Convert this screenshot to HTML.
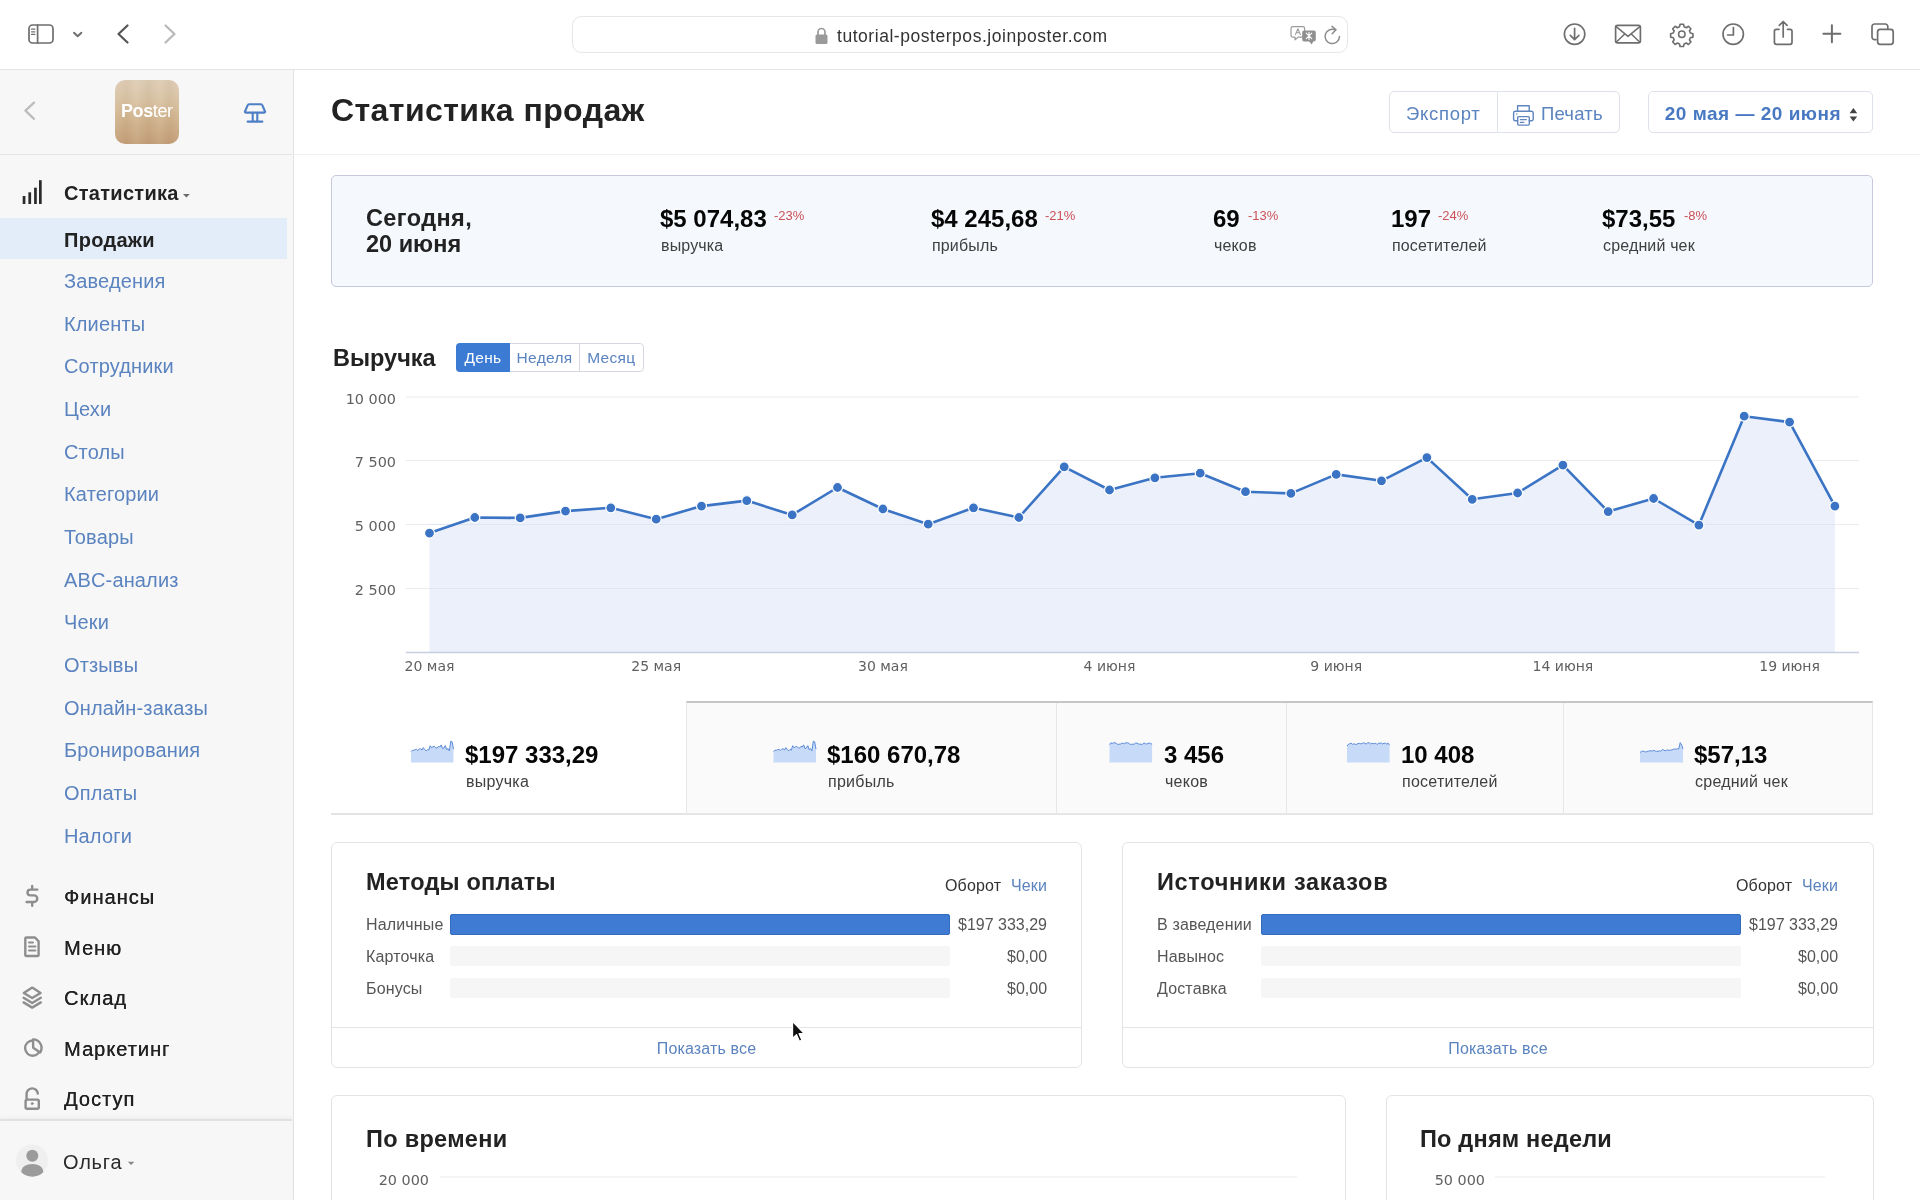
<!DOCTYPE html>
<html lang="ru">
<head>
<meta charset="utf-8">
<title>Статистика продаж</title>
<style>
*{box-sizing:border-box;margin:0;padding:0}
html,body{width:1920px;height:1200px;overflow:hidden;background:#fff}
body{font-family:"Liberation Sans",sans-serif;color:#222;position:relative}
.abs{position:absolute;white-space:nowrap;will-change:transform}
svg{position:absolute;overflow:visible;will-change:transform}
/* browser toolbar */
#tb{position:absolute;left:0;top:0;width:1920px;height:70px;background:#fff;border-bottom:1px solid #e4e4e4}
#url{position:absolute;left:572px;top:16.3px;width:776px;height:36.8px;border:1.5px solid #e6e6e6;border-radius:9.5px;background:#fff}
#urlt{left:837px;top:24.5px;font-size:17.5px;line-height:22px;color:#333;letter-spacing:0.54px}
/* sidebar */
#sb{position:absolute;left:0;top:70px;width:293.5px;height:1130px;background:#f7f7f7;border-right:1.5px solid #e2e2e2}
#sbh{position:absolute;left:0;top:0;width:292px;height:85px;border-bottom:1.5px solid #e4e4e4}
#logo{position:absolute;left:115px;top:10px;width:64px;height:64px;border-radius:10px;background:linear-gradient(90deg,rgba(255,255,255,0.05) 0%,rgba(120,80,40,0.04) 18%,rgba(255,255,255,0.07) 33%,rgba(120,80,40,0.05) 52%,rgba(255,255,255,0.06) 70%,rgba(120,80,40,0.05) 85%,rgba(255,255,255,0.04) 100%),linear-gradient(180deg,#decdb5 0%,#d9c3a4 30%,#d1b48f 60%,#c39e78 100%);overflow:hidden}
#logo span{will-change:transform;position:absolute;left:6px;top:20px;font-size:18px;line-height:22px;color:#fff;letter-spacing:-0.4px}
#logo b{font-weight:bold}
.s1{left:64px;font-size:20px;line-height:24px;color:#222;letter-spacing:1px;text-shadow:0.35px 0 0 #222}
.s1b{letter-spacing:0.3px;text-shadow:none}
.s2{left:64px;font-size:20px;line-height:24px;color:#5a83bf;letter-spacing:0.15px}
#act{position:absolute;left:0;top:148px;width:287px;height:41px;background:#e3edfa}
#sbf{position:absolute;left:0;top:1049px;width:292px;height:81px;border-top:2px solid #e1e1e1;background:#f7f7f7;box-shadow:0 -2px 3px rgba(0,0,0,0.035)}
/* main */
#hd{position:absolute;left:294px;top:70px;width:1626px;height:85px;border-bottom:1.5px solid #f0f0f0;background:#fff}
#title{left:331px;top:90px;font-size:32px;line-height:40px;font-weight:bold;color:#222;letter-spacing:0.42px}
.btn{position:absolute;top:91px;height:42px;border:1px solid #dde1e8;background:#fff;font-size:18.5px;line-height:44px;color:#5a83bf;white-space:nowrap;will-change:transform}
#today{position:absolute;left:331px;top:175px;width:1542px;height:111.5px;background:#f5f9fd;border:1.5px solid #c6c8de;border-radius:5px}
.tn{font-size:24px;line-height:28px;font-weight:bold;color:#060606;top:205px}
.tl{font-size:16px;line-height:20px;color:#404040;top:235.5px;letter-spacing:0.15px;margin-left:0.8px}
.tp{font-size:13px;line-height:14px;color:#cb4f55;top:209px}
.h2{font-size:24px;line-height:30px;font-weight:bold;color:#222}
.card{position:absolute;border:1px solid #e3e3e4;border-radius:6px;background:#fff}
.cl{font-size:16px;line-height:20px;color:#555;letter-spacing:0.15px}
.lnk{color:#5a83bf}
.bar{position:absolute;height:20px;border-radius:2px;background:#f6f6f6}
.bar.f{background:#3f7bd2;border:1px solid #356bbb;height:21px;margin-top:-0.5px}
.sn{font-size:24px;line-height:28px;font-weight:bold;color:#060606;top:740.5px}
.sl{font-size:16px;line-height:20px;color:#404040;top:771.5px;letter-spacing:0.25px;margin-left:0.8px}
.ax{font-family:"DejaVu Sans",sans-serif;font-size:14px;fill:#606060}
</style>
</head>
<body>
<!-- TOOLBAR -->
<div id="tb"></div>
<div id="url"></div>
<div class="abs" id="urlt">tutorial-posterpos.joinposter.com</div>

<svg id="tbi" width="1920" height="70" style="left:0;top:0" fill="none" stroke="#6e6e6e" stroke-width="1.7" stroke-linecap="round" stroke-linejoin="round">
<!-- sidebar toggle -->
<rect x="29" y="25" width="24" height="18" rx="3.5"/><line x1="37.6" y1="25" x2="37.6" y2="43"/>
<g stroke-width="1.3"><line x1="31.6" y1="29.2" x2="34.8" y2="29.2"/><line x1="31.6" y1="31.8" x2="34.8" y2="31.8"/><line x1="31.6" y1="34.4" x2="34.8" y2="34.4"/></g>
<polyline points="74,32.7 77.7,36.3 81.4,32.7" stroke-width="1.9"/>
<polyline points="127.5,25.5 118.5,34 127.5,42.5" stroke="#555" stroke-width="2.2"/>
<polyline points="165.5,25.5 174.5,34 165.5,42.5" stroke="#b9b9b9" stroke-width="2.3"/>
<!-- tb-lock -->
<g stroke="none" fill="#9a9a9a"><rect x="815.5" y="34.5" width="12" height="9.5" rx="1.5"/></g>
<path d="M818 35 v-3 a3.5 3.5 0 0 1 7 0 v3" stroke="#9a9a9a" stroke-width="1.7"/>
<!-- translate -->
<g stroke="#9b9b9b" stroke-width="1.2">
<path d="M1292.8 26.6 h10 a1.8 1.8 0 0 1 1.8 1.8 v6.9 a1.8 1.8 0 0 1 -1.8 1.8 h-4.6 l-3.2 2.7 v-2.7 h-2.2 a1.8 1.8 0 0 1 -1.8 -1.8 v-6.9 a1.8 1.8 0 0 1 1.8 -1.8z"/>
<path d="M1295.4 34.6 l2.5 -5.8 l2.5 5.8 M1296.3 32.8 h3.2" stroke-width="1.1"/>
</g>
<path d="M1304.2 30.4 h9.6 a2 2 0 0 1 2 2 v7 a2 2 0 0 1 -2 2 h-0.6 l-1.4 3.1 l-2.6 -3.1 h-5 a2 2 0 0 1 -2 -2 v-7 a2 2 0 0 1 2 -2z" fill="#8f8f8f" stroke="none"/>
<path d="M1306.2 33.2 l5.6 5.4 M1311.8 33.2 l-5.6 5.4 M1309 32.2 v7.4" stroke="#fff" stroke-width="1.1"/>
<!-- reload -->
<path d="M1339.5 36.6 a7.2 7.2 0 1 1 -3.9 -6.6" stroke="#8c8c8c" stroke-width="1.5"/>
<polyline points="1332,26.4 1336,29.8 1332.2,33.8" stroke="#8c8c8c" stroke-width="1.5"/>
<!-- download -->
<circle cx="1574.6" cy="34.2" r="10.2"/><path d="M1574.6 28.3 v11 M1570.3 35.4 l4.3 4.2 l4.3 -4.2"/>
<!-- mail -->
<rect x="1615.6" y="25.4" width="24.8" height="17.4" rx="2"/><path d="M1616.2 26.6 l11.8 9.8 l11.8 -9.8 M1616.4 42 l8.3 -8 M1639.6 42 l-8.3 -8" stroke-width="1.5"/>
<!-- gear -->
<g transform="translate(1681.8 34.3) scale(0.9)"><circle r="3.6"/>
<path d="M-1.9 -11.2 h3.8 l0.7 2.9 l2.3 1.0 l2.5 -1.6 l2.7 2.7 l-1.6 2.5 l1.0 2.3 l2.9 0.7 v3.8 l-2.9 0.7 l-1.0 2.3 l1.6 2.5 l-2.7 2.7 l-2.5 -1.6 l-2.3 1.0 l-0.7 2.9 h-3.8 l-0.7 -2.9 l-2.3 -1.0 l-2.5 1.6 l-2.7 -2.7 l1.6 -2.5 l-1.0 -2.3 l-2.9 -0.7 v-3.8 l2.9 -0.7 l1.0 -2.3 l-1.6 -2.5 l2.7 -2.7 l2.5 1.6 l2.3 -1.0z" stroke-width="1.8"/></g>
<!-- clock -->
<circle cx="1733.2" cy="34.2" r="10.2"/><polyline points="1733.4,27.6 1733.4,35 1727.6,35"/>
<!-- share -->
<path d="M1779 29.3 h-2.6 a2 2 0 0 0 -2 2 v11 a2 2 0 0 0 2 2 h13.6 a2 2 0 0 0 2 -2 v-11 a2 2 0 0 0 -2 -2 h-2.6 M1783.2 37 v-15.2 M1779.3 25.4 l3.9 -3.9 l3.9 3.9"/>
<!-- plus -->
<path d="M1823.4 33.7 h17 M1831.9 25.2 v17" stroke-width="2"/>
<!-- tabs -->
<path d="M1876 39.6 h-1.4 a2.6 2.6 0 0 1 -2.6 -2.6 v-10.4 a2.6 2.6 0 0 1 2.6 -2.6 h10.6 a2.6 2.6 0 0 1 2.6 2.6 v1.6"/>
<rect x="1877.6" y="29.3" width="15.6" height="15" rx="2.6" fill="#fff"/>
</svg>
<!-- SIDEBAR -->
<div id="sb">
 <div id="sbh"><div id="logo"><span><b>Pos</b>ter</span></div></div>
 <div id="act"></div>
 <div id="sbf"></div>
</div>
<div class="abs s1 s1b" style="top:181px;font-weight:bold">Статистика</div>
<div class="abs s1 s1b" style="top:228px;font-weight:bold">Продажи</div>
<div class="abs s2" style="top:269px">Заведения</div>
<div class="abs s2" style="top:312px">Клиенты</div>
<div class="abs s2" style="top:354px">Сотрудники</div>
<div class="abs s2" style="top:397px">Цехи</div>
<div class="abs s2" style="top:440px">Столы</div>
<div class="abs s2" style="top:482px">Категории</div>
<div class="abs s2" style="top:525px">Товары</div>
<div class="abs s2" style="top:568px">ABC-анализ</div>
<div class="abs s2" style="top:610px">Чеки</div>
<div class="abs s2" style="top:653px">Отзывы</div>
<div class="abs s2" style="top:696px">Онлайн-заказы</div>
<div class="abs s2" style="top:738px">Бронирования</div>
<div class="abs s2" style="top:781px">Оплаты</div>
<div class="abs s2" style="top:824px">Налоги</div>
<div class="abs s1" style="top:885px">Финансы</div>
<div class="abs s1" style="top:936px">Меню</div>
<div class="abs s1" style="top:986px">Склад</div>
<div class="abs s1" style="top:1037px">Маркетинг</div>
<div class="abs s1" style="top:1087px">Доступ</div>
<div class="abs s1" style="top:1150px;left:62.5px;letter-spacing:0.8px;text-shadow:none;color:#2a2a2a">Ольга</div>
<svg id="sbi" width="293" height="1200" style="left:0;top:0" fill="none" stroke="#8e8e8e" stroke-width="2.4" stroke-linecap="round" stroke-linejoin="round">
<polyline points="34,102.6 25.4,110.7 34,118.8" stroke="#bdbdbd" stroke-width="2.3"/>
<!-- lamp -->
<g stroke="#4d7fc6" stroke-width="2.1"><path d="M249 104.2 h12 a1.4 1.4 0 0 1 1.3 0.9 l2.7 6.4 a0.8 0.8 0 0 1 -0.7 1.1 h-18.6 a0.8 0.8 0 0 1 -0.7 -1.1 l2.7 -6.4 a1.4 1.4 0 0 1 1.3 -0.9z"/><path d="M252.7 112.8 v8.6 M257.3 112.8 v8.6 M247.6 121.6 h14.8"/></g>
<!-- bars -->
<g stroke="none" fill="#2a2a2a"><rect x="22.7" y="196" width="2.7" height="8"/><rect x="28.4" y="192.3" width="2.7" height="11.7"/><rect x="34.1" y="187.7" width="2.7" height="16.3"/><rect x="39" y="180.2" width="2.7" height="23.8"/></g>
<path d="M183 194 h6.8 l-3.4 3.4z" fill="#6a6a6a" stroke="none"/>
<!-- dollar -->
<path d="M37.3 889.6 h-6.9 a2.9 2.9 0 0 0 0 5.8 h3.6 a3.3 3.3 0 0 1 0 6.6 h-7.4 M32.2 886 v3 M32.2 902.4 v3.4"/>
<!-- doc -->
<path d="M25.3 938.6 a1.1 1.1 0 0 1 1.1 -1.1 h8.6 l3.6 3.8 v13.6 a1.1 1.1 0 0 1 -1.1 1.1 h-11.1 a1.1 1.1 0 0 1 -1.1 -1.1z"/><path d="M29 942.4 h4 M29 946.5 h6.4 M29 950.6 h6.4" stroke-width="2"/>
<!-- layers -->
<path d="M32.2 987.6 l8.4 5.3 l-8.4 5.2 l-8.4 -5.2z M23.6 997.8 l8.6 5.2 l8.6 -5.2 M23.6 1002.4 l8.6 5.2 l8.6 -5.2"/>
<!-- pie -->
<circle cx="32.7" cy="1048.1" r="7.6"/><path d="M33 1039.4 a8.5 8.5 0 0 1 7.2 13 l-7 -4.6z" fill="#f7f7f7"/>
<!-- sb-lock -->
<rect x="25.6" y="1099.6" width="13.2" height="9.2" rx="1.6"/><path d="M26.6 1099.4 v-5 a5.6 5.6 0 0 1 11.2 -0.8"/><circle cx="32.2" cy="1103.6" r="1" fill="#8e8e8e" stroke-width="1"/>
<!-- avatar -->
<circle cx="32" cy="1160.5" r="16" fill="#efefef" stroke="none"/>
<circle cx="32.3" cy="1155.8" r="6" fill="#9b9b9b" stroke="none"/>
<path d="M21.3 1172.3 c0 -5.4 5 -8.2 11 -8.2 s11 2.8 11 8.2 a16 16 0 0 1 -22 0z" fill="#9b9b9b" stroke="none"/>
<path d="M127.8 1161.7 h6.6 l-3.3 3.4z" fill="#888" stroke="none"/>
</svg>
<!-- HEADER -->
<div id="hd"></div>
<div class="abs" id="title">Статистика продаж</div>
<div class="btn" style="left:1389px;width:108.5px;border-radius:5px 0 0 5px;padding-left:16px;letter-spacing:0.7px">Экспорт</div>
<div class="btn" style="left:1496.5px;width:122.5px;border-radius:0 5px 5px 0;padding-left:43px;letter-spacing:0.2px">Печать</div>
<div class="btn" style="left:1647.5px;width:224.5px;border-radius:5px;padding-left:15.8px;font-weight:bold;color:#4878c2;letter-spacing:0.5px;font-size:19px">20 мая — 20 июня</div>
<svg width="1920" height="160" style="left:0;top:0" fill="none" stroke="#5f86bf" stroke-width="1.4" stroke-linejoin="round" stroke-linecap="round">
<path d="M1517.6 111.2 v-5.4 h11.6 v5.4"/>
<path d="M1517.6 120.7 h-2.4 a1.6 1.6 0 0 1 -1.6 -1.6 v-6.2 a1.6 1.6 0 0 1 1.6 -1.6 h16.4 a1.6 1.6 0 0 1 1.6 1.6 v6.2 a1.6 1.6 0 0 1 -1.6 1.6 h-2.4"/>
<rect x="1517.7" y="116.6" width="11.6" height="8.5" rx="1"/>
<path d="M1520.4 119.6 h6 M1520.4 122.3 h3.5" stroke-width="1.2"/>
<circle cx="1516.8" cy="114" r="0.7" fill="#5f86bf" stroke="none"/>
<path d="M1849.6 113.2 l3.8 -5.2 l3.8 5.2z M1849.6 116.4 l3.8 5.2 l3.8 -5.2z" fill="#444" stroke="none"/>
</svg>

<!-- TODAY -->
<div id="today"></div>
<div class="abs h2" style="left:366px;top:205px;line-height:26px;font-size:23.5px"><span style="letter-spacing:0.4px">Сегодня,</span><br>20 июня</div>
<div class="abs tn" style="left:660px">$5 074,83</div><div class="abs tp" style="left:774px">-23%</div><div class="abs tl" style="left:660px">выручка</div>
<div class="abs tn" style="left:931px">$4 245,68</div><div class="abs tp" style="left:1045px">-21%</div><div class="abs tl" style="left:931px">прибыль</div>
<div class="abs tn" style="left:1213px">69</div><div class="abs tp" style="left:1248px">-13%</div><div class="abs tl" style="left:1213px">чеков</div>
<div class="abs tn" style="left:1391px">197</div><div class="abs tp" style="left:1438px">-24%</div><div class="abs tl" style="left:1391px">посетителей</div>
<div class="abs tn" style="left:1602px">$73,55</div><div class="abs tp" style="left:1684px">-8%</div><div class="abs tl" style="left:1602px">средний чек</div>

<!-- CHART -->
<div class="abs h2" style="left:332.5px;top:343px;font-size:23.5px">Выручка</div>
<div class="abs" style="left:456px;top:343px;width:187.5px;height:28.7px;border:1px solid #d5d9df;border-radius:4px;background:#fff"></div>
<div class="abs" style="left:456px;top:343px;width:54px;height:28.7px;background:#3c7bd3;border-radius:4px 0 0 4px;color:#fff;font-size:15.5px;letter-spacing:0.3px;line-height:29px;text-align:center">День</div>
<div class="abs lnk" style="left:510px;top:343px;width:70px;height:28.7px;border-right:1px solid #d5d9df;font-size:15.5px;letter-spacing:0.3px;line-height:29px;text-align:center">Неделя</div>
<div class="abs lnk" style="left:580px;top:343px;width:62.5px;height:28.7px;font-size:15.5px;letter-spacing:0.3px;line-height:29px;text-align:center">Месяц</div>
<!--CS--><svg id="chart" width="1920" height="1200" style="left:0;top:0">
<line x1="406" x2="1859" y1="397" y2="397" stroke="#ececf0" stroke-width="1.2"/>
<line x1="406" x2="1859" y1="460.5" y2="460.5" stroke="#ececf0" stroke-width="1.2"/>
<line x1="406" x2="1859" y1="524.5" y2="524.5" stroke="#ececf0" stroke-width="1.2"/>
<line x1="406" x2="1859" y1="588.5" y2="588.5" stroke="#ececf0" stroke-width="1.2"/>
<polygon points="429.5,652.5 429.5,533.1 474.8,517.5 520.2,517.9 565.5,511.1 610.8,507.8 656.2,519.2 701.5,506.1 746.8,500.6 792.2,514.9 837.5,487.5 882.9,509 928.2,524.2 973.5,507.8 1018.9,517.5 1064.2,466.8 1109.5,490 1154.9,477.8 1200.2,473.2 1245.5,491.7 1290.9,493.4 1336.2,474.4 1381.5,480.8 1426.9,457.6 1472.2,499.3 1517.6,493 1562.9,465.1 1608.2,511.6 1653.6,498.5 1698.9,525.1 1744.2,416.2 1789.6,422.1 1834.9,506.1 1834.9,652.5" fill="#ebf0fb"/>
<line x1="429.5" x2="1834.9" y1="524.5" y2="524.5" stroke="#dfe6f3" stroke-width="1.2"/>
<line x1="429.5" x2="1834.9" y1="588.5" y2="588.5" stroke="#dfe6f3" stroke-width="1.2"/>
<line x1="406" x2="1859" y1="652.5" y2="652.5" stroke="#c5cfdf" stroke-width="1.5"/>
<polyline points="429.5,533.1 474.8,517.5 520.2,517.9 565.5,511.1 610.8,507.8 656.2,519.2 701.5,506.1 746.8,500.6 792.2,514.9 837.5,487.5 882.9,509 928.2,524.2 973.5,507.8 1018.9,517.5 1064.2,466.8 1109.5,490 1154.9,477.8 1200.2,473.2 1245.5,491.7 1290.9,493.4 1336.2,474.4 1381.5,480.8 1426.9,457.6 1472.2,499.3 1517.6,493 1562.9,465.1 1608.2,511.6 1653.6,498.5 1698.9,525.1 1744.2,416.2 1789.6,422.1 1834.9,506.1" fill="none" stroke="#3b74c4" stroke-width="2.6" stroke-linejoin="round" stroke-linecap="round"/>
<circle cx="429.5" cy="533.1" r="5" fill="#3b74c4" stroke="#fff" stroke-width="1.2"/>
<circle cx="474.8" cy="517.5" r="5" fill="#3b74c4" stroke="#fff" stroke-width="1.2"/>
<circle cx="520.2" cy="517.9" r="5" fill="#3b74c4" stroke="#fff" stroke-width="1.2"/>
<circle cx="565.5" cy="511.1" r="5" fill="#3b74c4" stroke="#fff" stroke-width="1.2"/>
<circle cx="610.8" cy="507.8" r="5" fill="#3b74c4" stroke="#fff" stroke-width="1.2"/>
<circle cx="656.2" cy="519.2" r="5" fill="#3b74c4" stroke="#fff" stroke-width="1.2"/>
<circle cx="701.5" cy="506.1" r="5" fill="#3b74c4" stroke="#fff" stroke-width="1.2"/>
<circle cx="746.8" cy="500.6" r="5" fill="#3b74c4" stroke="#fff" stroke-width="1.2"/>
<circle cx="792.2" cy="514.9" r="5" fill="#3b74c4" stroke="#fff" stroke-width="1.2"/>
<circle cx="837.5" cy="487.5" r="5" fill="#3b74c4" stroke="#fff" stroke-width="1.2"/>
<circle cx="882.9" cy="509" r="5" fill="#3b74c4" stroke="#fff" stroke-width="1.2"/>
<circle cx="928.2" cy="524.2" r="5" fill="#3b74c4" stroke="#fff" stroke-width="1.2"/>
<circle cx="973.5" cy="507.8" r="5" fill="#3b74c4" stroke="#fff" stroke-width="1.2"/>
<circle cx="1018.9" cy="517.5" r="5" fill="#3b74c4" stroke="#fff" stroke-width="1.2"/>
<circle cx="1064.2" cy="466.8" r="5" fill="#3b74c4" stroke="#fff" stroke-width="1.2"/>
<circle cx="1109.5" cy="490" r="5" fill="#3b74c4" stroke="#fff" stroke-width="1.2"/>
<circle cx="1154.9" cy="477.8" r="5" fill="#3b74c4" stroke="#fff" stroke-width="1.2"/>
<circle cx="1200.2" cy="473.2" r="5" fill="#3b74c4" stroke="#fff" stroke-width="1.2"/>
<circle cx="1245.5" cy="491.7" r="5" fill="#3b74c4" stroke="#fff" stroke-width="1.2"/>
<circle cx="1290.9" cy="493.4" r="5" fill="#3b74c4" stroke="#fff" stroke-width="1.2"/>
<circle cx="1336.2" cy="474.4" r="5" fill="#3b74c4" stroke="#fff" stroke-width="1.2"/>
<circle cx="1381.5" cy="480.8" r="5" fill="#3b74c4" stroke="#fff" stroke-width="1.2"/>
<circle cx="1426.9" cy="457.6" r="5" fill="#3b74c4" stroke="#fff" stroke-width="1.2"/>
<circle cx="1472.2" cy="499.3" r="5" fill="#3b74c4" stroke="#fff" stroke-width="1.2"/>
<circle cx="1517.6" cy="493" r="5" fill="#3b74c4" stroke="#fff" stroke-width="1.2"/>
<circle cx="1562.9" cy="465.1" r="5" fill="#3b74c4" stroke="#fff" stroke-width="1.2"/>
<circle cx="1608.2" cy="511.6" r="5" fill="#3b74c4" stroke="#fff" stroke-width="1.2"/>
<circle cx="1653.6" cy="498.5" r="5" fill="#3b74c4" stroke="#fff" stroke-width="1.2"/>
<circle cx="1698.9" cy="525.1" r="5" fill="#3b74c4" stroke="#fff" stroke-width="1.2"/>
<circle cx="1744.2" cy="416.2" r="5" fill="#3b74c4" stroke="#fff" stroke-width="1.2"/>
<circle cx="1789.6" cy="422.1" r="5" fill="#3b74c4" stroke="#fff" stroke-width="1.2"/>
<circle cx="1834.9" cy="506.1" r="5" fill="#3b74c4" stroke="#fff" stroke-width="1.2"/>
<text class="ax" style="font-size:14.4px" x="396" y="403.5" text-anchor="end">10 000</text>
<text class="ax" style="font-size:14.4px" x="396" y="467.0" text-anchor="end">7 500</text>
<text class="ax" style="font-size:14.4px" x="396" y="531.0" text-anchor="end">5 000</text>
<text class="ax" style="font-size:14.4px" x="396" y="595.0" text-anchor="end">2 500</text>
<text class="ax" x="429.5" y="671" text-anchor="middle">20 мая</text>
<text class="ax" x="656.2" y="671" text-anchor="middle">25 мая</text>
<text class="ax" x="882.9" y="671" text-anchor="middle">30 мая</text>
<text class="ax" x="1109.5" y="671" text-anchor="middle">4 июня</text>
<text class="ax" x="1336.2" y="671" text-anchor="middle">9 июня</text>
<text class="ax" x="1562.9" y="671" text-anchor="middle">14 июня</text>
<text class="ax" x="1789.6" y="671" text-anchor="middle">19 июня</text>
</svg>
<!--CE-->

<!-- SUMMARY TABS -->
<div class="abs" style="left:331px;top:813px;width:1542px;height:1.5px;background:#e4e4e4"></div>
<div class="abs" style="left:686px;top:701px;width:1187px;height:113px;background:#fafafa;border:1px solid #e7e7e7;border-top:2px solid #c6c6c6"></div>
<div class="abs" style="left:1056px;top:703px;width:1px;height:110px;background:#e7e7e7"></div>
<div class="abs" style="left:1286px;top:703px;width:1px;height:110px;background:#e7e7e7"></div>
<div class="abs" style="left:1563px;top:703px;width:1px;height:110px;background:#e7e7e7"></div>
<div class="abs sn" style="left:465px">$197 333,29</div><div class="abs sl" style="left:465px">выручка</div>
<div class="abs sn" style="left:827px">$160 670,78</div><div class="abs sl" style="left:827px">прибыль</div>
<div class="abs sn" style="left:1164px">3 456</div><div class="abs sl" style="left:1164px">чеков</div>
<div class="abs sn" style="left:1401px">10 408</div><div class="abs sl" style="left:1401px">посетителей</div>
<div class="abs sn" style="left:1694px">$57,13</div><div class="abs sl" style="left:1694px">средний чек</div>
<!--SPS--><svg id="sparks" width="1920" height="1200" style="left:0;top:0">
<polygon points="411,762.4 411.0,751.6 412.4,750.2 413.7,750.3 415.1,749.7 416.5,749.4 417.9,750.4 419.2,749.2 420.6,748.7 422.0,750.0 423.3,747.6 424.7,749.5 426.1,750.8 427.5,749.4 428.8,750.2 430.2,745.7 431.6,747.8 432.9,746.7 434.3,746.3 435.7,747.9 437.0,748.1 438.4,746.4 439.8,747.0 441.2,744.9 442.5,748.6 443.9,748.0 445.3,745.6 446.6,749.7 448.0,748.5 449.4,750.9 450.8,741.2 452.1,741.7 453.5,749.2 453.5,762.4" fill="#c7daf8"/><polyline points="411.0,751.6 412.4,750.2 413.7,750.3 415.1,749.7 416.5,749.4 417.9,750.4 419.2,749.2 420.6,748.7 422.0,750.0 423.3,747.6 424.7,749.5 426.1,750.8 427.5,749.4 428.8,750.2 430.2,745.7 431.6,747.8 432.9,746.7 434.3,746.3 435.7,747.9 437.0,748.1 438.4,746.4 439.8,747.0 441.2,744.9 442.5,748.6 443.9,748.0 445.3,745.6 446.6,749.7 448.0,748.5 449.4,750.9 450.8,741.2 452.1,741.7 453.5,749.2" fill="none" stroke="#5a8ad6" stroke-width="1" stroke-linejoin="round"/>
<polygon points="773.5,762.4 773.5,751.6 774.9,750.2 776.2,750.3 777.6,749.7 779.0,749.4 780.4,750.4 781.7,749.2 783.1,748.7 784.5,750.0 785.8,747.6 787.2,749.5 788.6,750.8 790.0,749.4 791.3,750.2 792.7,745.7 794.1,747.8 795.4,746.7 796.8,746.3 798.2,747.9 799.5,748.1 800.9,746.4 802.3,747.0 803.7,744.9 805.0,748.6 806.4,748.0 807.8,745.6 809.1,749.7 810.5,748.5 811.9,750.9 813.3,741.2 814.6,741.7 816.0,749.2 816.0,762.4" fill="#c7daf8"/><polyline points="773.5,751.6 774.9,750.2 776.2,750.3 777.6,749.7 779.0,749.4 780.4,750.4 781.7,749.2 783.1,748.7 784.5,750.0 785.8,747.6 787.2,749.5 788.6,750.8 790.0,749.4 791.3,750.2 792.7,745.7 794.1,747.8 795.4,746.7 796.8,746.3 798.2,747.9 799.5,748.1 800.9,746.4 802.3,747.0 803.7,744.9 805.0,748.6 806.4,748.0 807.8,745.6 809.1,749.7 810.5,748.5 811.9,750.9 813.3,741.2 814.6,741.7 816.0,749.2" fill="none" stroke="#5a8ad6" stroke-width="1" stroke-linejoin="round"/>
<polygon points="1109.5,762.4 1109.5,744.6 1110.9,742.8 1112.2,743.4 1113.6,742.9 1115.0,742.7 1116.4,743.4 1117.7,744.4 1119.1,744.2 1120.5,744.1 1121.9,743.0 1123.2,743.7 1124.6,743.2 1126.0,742.9 1127.4,742.8 1128.7,743.0 1130.1,744.5 1131.5,744.3 1132.9,744.2 1134.2,744.2 1135.6,743.0 1137.0,743.2 1138.4,743.9 1139.7,744.1 1141.1,744.3 1142.5,744.4 1143.9,742.8 1145.2,743.8 1146.6,743.9 1148.0,743.6 1149.4,743.0 1150.7,743.5 1152.1,744.3 1152.1,762.4" fill="#c7daf8"/><polyline points="1109.5,744.6 1110.9,742.8 1112.2,743.4 1113.6,742.9 1115.0,742.7 1116.4,743.4 1117.7,744.4 1119.1,744.2 1120.5,744.1 1121.9,743.0 1123.2,743.7 1124.6,743.2 1126.0,742.9 1127.4,742.8 1128.7,743.0 1130.1,744.5 1131.5,744.3 1132.9,744.2 1134.2,744.2 1135.6,743.0 1137.0,743.2 1138.4,743.9 1139.7,744.1 1141.1,744.3 1142.5,744.4 1143.9,742.8 1145.2,743.8 1146.6,743.9 1148.0,743.6 1149.4,743.0 1150.7,743.5 1152.1,744.3" fill="none" stroke="#5a8ad6" stroke-width="1" stroke-linejoin="round"/>
<polygon points="1347,762.4 1347.0,746.0 1348.4,744.3 1349.7,743.7 1351.1,743.2 1352.5,744.4 1353.9,743.7 1355.2,744.4 1356.6,744.3 1358.0,743.6 1359.4,743.4 1360.7,743.8 1362.1,743.5 1363.5,742.9 1364.9,743.2 1366.2,744.2 1367.6,742.7 1369.0,742.7 1370.4,743.9 1371.7,743.2 1373.1,743.7 1374.5,743.5 1375.9,743.3 1377.2,744.6 1378.6,743.0 1380.0,743.4 1381.4,743.0 1382.7,743.9 1384.1,743.2 1385.5,743.3 1386.9,744.1 1388.2,743.2 1389.6,745.2 1389.6,762.4" fill="#c7daf8"/><polyline points="1347.0,746.0 1348.4,744.3 1349.7,743.7 1351.1,743.2 1352.5,744.4 1353.9,743.7 1355.2,744.4 1356.6,744.3 1358.0,743.6 1359.4,743.4 1360.7,743.8 1362.1,743.5 1363.5,742.9 1364.9,743.2 1366.2,744.2 1367.6,742.7 1369.0,742.7 1370.4,743.9 1371.7,743.2 1373.1,743.7 1374.5,743.5 1375.9,743.3 1377.2,744.6 1378.6,743.0 1380.0,743.4 1381.4,743.0 1382.7,743.9 1384.1,743.2 1385.5,743.3 1386.9,744.1 1388.2,743.2 1389.6,745.2" fill="none" stroke="#5a8ad6" stroke-width="1" stroke-linejoin="round"/>
<polygon points="1640,762.4 1640.0,752.6 1641.4,751.3 1642.8,751.2 1644.2,751.3 1645.5,752.0 1646.9,751.6 1648.3,751.0 1649.7,751.0 1651.1,750.7 1652.5,751.0 1653.9,750.3 1655.3,751.1 1656.6,751.3 1658.0,751.3 1659.4,750.9 1660.8,751.1 1662.2,749.7 1663.6,749.9 1665.0,750.8 1666.4,750.4 1667.7,749.8 1669.1,750.5 1670.5,749.9 1671.9,750.1 1673.3,749.2 1674.7,749.0 1676.1,749.2 1677.5,748.7 1678.8,748.9 1680.2,742.6 1681.6,745.0 1683.0,749.0 1683,762.4" fill="#c7daf8"/><polyline points="1640.0,752.6 1641.4,751.3 1642.8,751.2 1644.2,751.3 1645.5,752.0 1646.9,751.6 1648.3,751.0 1649.7,751.0 1651.1,750.7 1652.5,751.0 1653.9,750.3 1655.3,751.1 1656.6,751.3 1658.0,751.3 1659.4,750.9 1660.8,751.1 1662.2,749.7 1663.6,749.9 1665.0,750.8 1666.4,750.4 1667.7,749.8 1669.1,750.5 1670.5,749.9 1671.9,750.1 1673.3,749.2 1674.7,749.0 1676.1,749.2 1677.5,748.7 1678.8,748.9 1680.2,742.6 1681.6,745.0 1683.0,749.0" fill="none" stroke="#5a8ad6" stroke-width="1" stroke-linejoin="round"/>
</svg>
<!--SPE-->


<!-- CARDS -->
<div class="card" style="left:331px;top:842px;width:751px;height:226px"></div>
<div class="abs" style="left:332px;top:1027px;width:749px;height:1px;background:#e3e5e8"></div>
<div class="abs h2" style="left:366px;top:867px;font-size:23.5px;letter-spacing:0.2px">Методы оплаты</div>
<div class="abs cl" style="left:944.5px;top:876.2px;color:#333">Оборот</div><div class="abs cl lnk" style="left:1010.5px;top:876.2px">Чеки</div>
<div class="abs cl" style="left:366px;top:915px">Наличные</div><div class="bar f" style="left:450px;top:914px;width:500px"></div><div class="abs cl" style="letter-spacing:0;right:873px;top:915px">$197 333,29</div>
<div class="abs cl" style="left:366px;top:947px">Карточка</div><div class="bar" style="left:450px;top:946px;width:500px"></div><div class="abs cl" style="letter-spacing:0;right:873px;top:947px">$0,00</div>
<div class="abs cl" style="left:366px;top:979px">Бонусы</div><div class="bar" style="left:450px;top:978px;width:500px"></div><div class="abs cl" style="letter-spacing:0;right:873px;top:979px">$0,00</div>
<div class="abs cl lnk" style="left:331px;width:751px;text-align:center;top:1038.7px">Показать все</div>

<div class="card" style="left:1122px;top:842px;width:752px;height:226px"></div>
<div class="abs" style="left:1123px;top:1027px;width:750px;height:1px;background:#e3e5e8"></div>
<div class="abs h2" style="left:1157px;top:867px;font-size:23.5px;letter-spacing:0.7px">Источники заказов</div>
<div class="abs cl" style="left:1735.5px;top:876.2px;color:#333">Оборот</div><div class="abs cl lnk" style="left:1801.5px;top:876.2px">Чеки</div>
<div class="abs cl" style="left:1157px;top:915px">В заведении</div><div class="bar f" style="left:1261px;top:914px;width:480px"></div><div class="abs cl" style="letter-spacing:0;right:82px;top:915px">$197 333,29</div>
<div class="abs cl" style="left:1157px;top:947px">Навынос</div><div class="bar" style="left:1261px;top:946px;width:480px"></div><div class="abs cl" style="letter-spacing:0;right:82px;top:947px">$0,00</div>
<div class="abs cl" style="left:1157px;top:979px">Доставка</div><div class="bar" style="left:1261px;top:978px;width:480px"></div><div class="abs cl" style="letter-spacing:0;right:82px;top:979px">$0,00</div>
<div class="abs cl lnk" style="left:1122px;width:752px;text-align:center;top:1038.7px">Показать все</div>

<div class="card" style="left:331px;top:1095px;width:1015px;height:130px"></div>
<div class="abs h2" style="left:366px;top:1124px;font-size:23.5px;letter-spacing:0.3px">По времени</div>
<div class="card" style="left:1386px;top:1095px;width:488px;height:130px"></div>
<div class="abs h2" style="left:1420px;top:1124px;font-size:23.5px;letter-spacing:0.2px">По дням недели</div>
<svg width="1920" height="1200" style="left:0;top:0">
<line x1="440" x2="1297" y1="1177" y2="1177" stroke="#ececf0" stroke-width="1.2"/>
<line x1="1495" x2="1825" y1="1177" y2="1177" stroke="#ececf0" stroke-width="1.2"/>
<text class="ax" style="font-size:14.4px" x="429" y="1185" text-anchor="end">20 000</text>
<text class="ax" style="font-size:14.4px" x="1485" y="1185" text-anchor="end">50 000</text>
</svg>

<svg id="cursor" width="16" height="24" viewBox="0 0 16 24" style="left:790.5px;top:1020px"><path d="M1.5 1.2 v17.2 l4 -3.7 l2.9 6.6 l2.6 -1.1 l-2.9 -6.5 h5.4z" fill="#111" stroke="#fff" stroke-width="1.3" stroke-linejoin="round"/></svg>
</body>
</html>
